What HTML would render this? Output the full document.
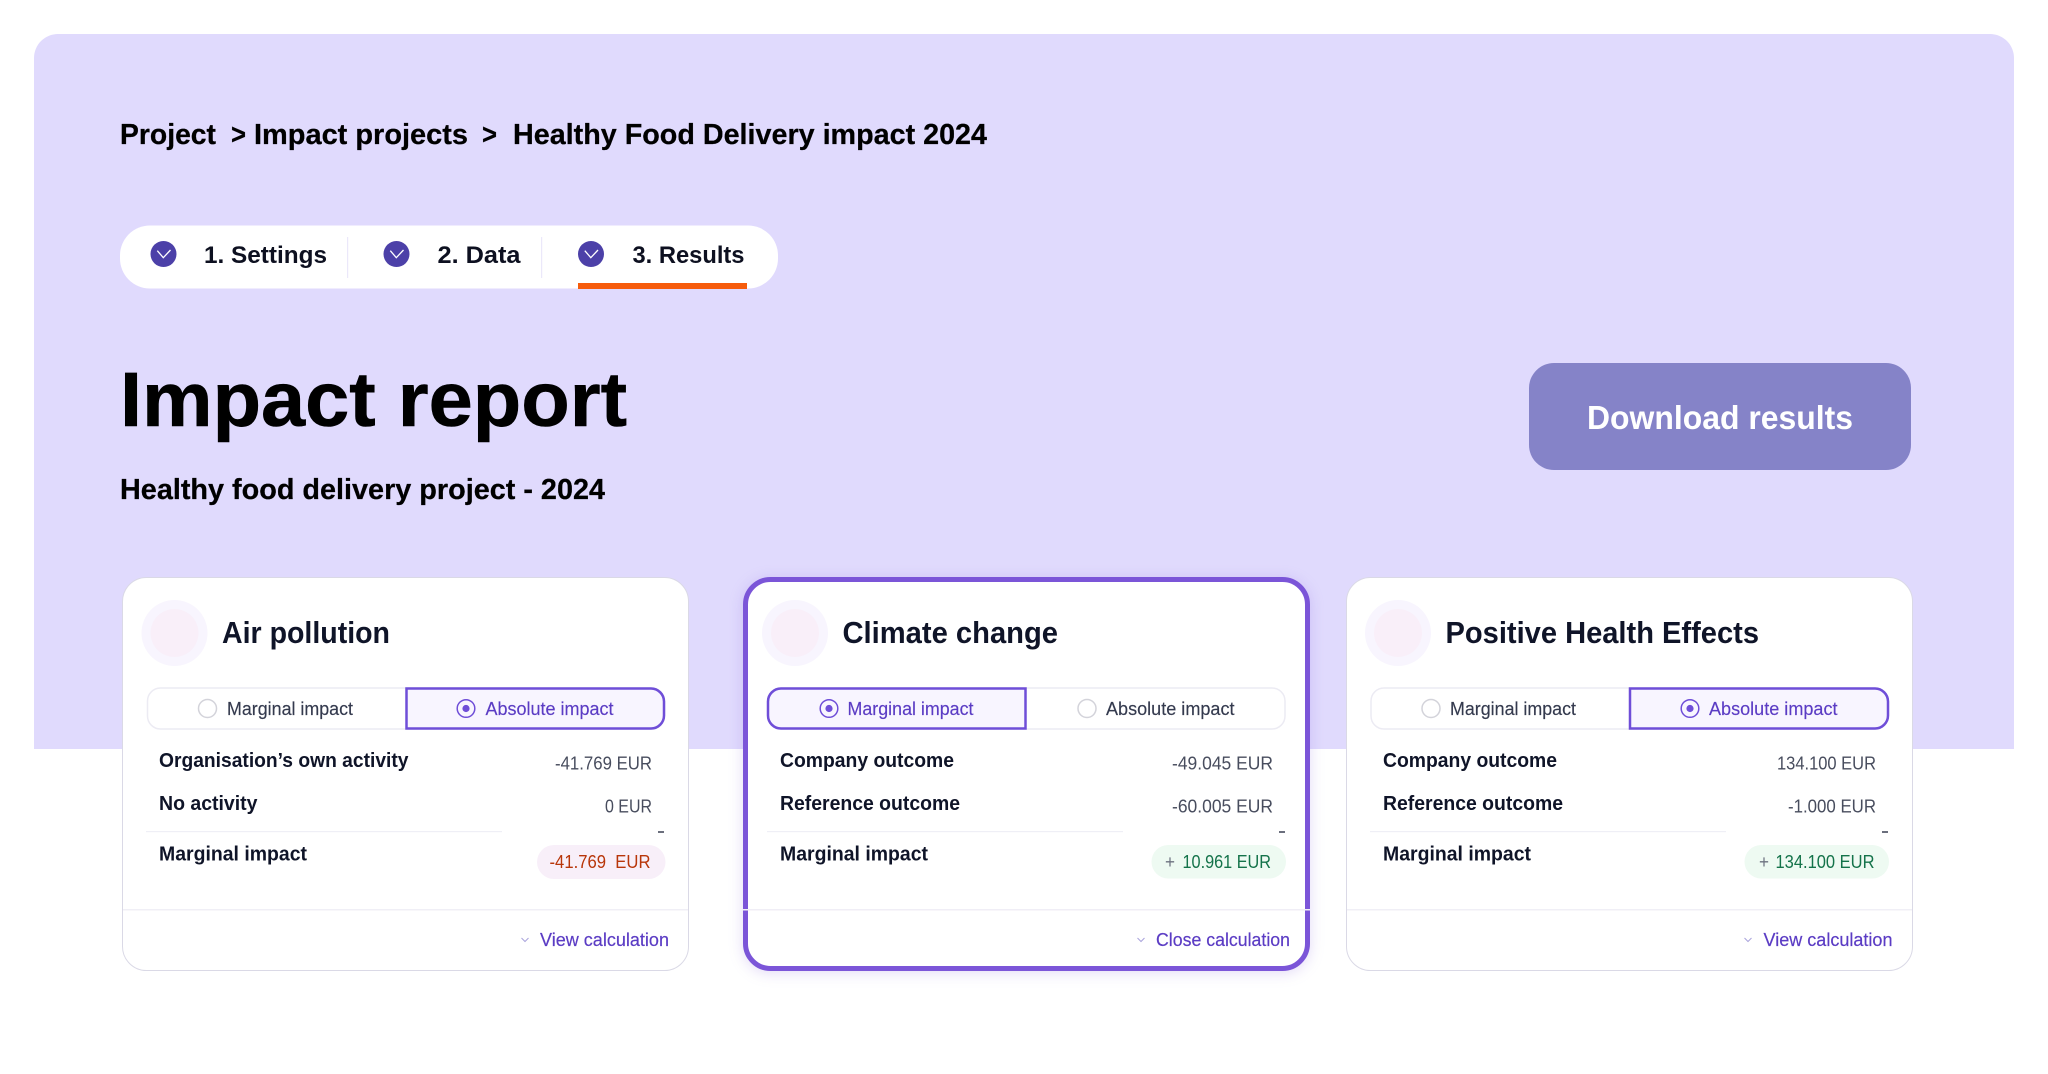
<!DOCTYPE html>
<html lang="en">
<head>
<meta charset="utf-8">
<title>Impact report</title>
<style>
html,body{margin:0;padding:0;background:#fff;width:2048px;height:1074px;overflow:hidden}
svg{display:block}
text{font-family:"Liberation Sans",sans-serif;white-space:pre}
.crumb{font-size:29px;font-weight:700;fill:#000;stroke:#000;stroke-width:.25}
.step{font-size:24px;font-weight:700;fill:#0d1020}
.title{font-size:31px;font-weight:700;fill:#0f1428}
.tog{font-size:18.5px;fill:#343a4e;stroke:#343a4e;stroke-width:.15}
.toga{font-size:18.5px;fill:#5b3cc4;stroke:#5b3cc4;stroke-width:.15}
.lab{font-size:20.5px;font-weight:700;fill:#0f1428}
.val{font-size:18.5px;fill:#484d5e}
.neg{font-size:18.5px;fill:#b8360a}
.pos{font-size:18.5px;fill:#14734a}
.plus{font-size:18px;fill:#6d7280}
.link{font-size:18.5px;fill:#5b3cc4;stroke:#5b3cc4;stroke-width:.2}
</style>
</head>
<body>
<svg xmlns="http://www.w3.org/2000/svg" width="2048" height="1074" viewBox="0 0 2048 1074">
<rect width="2048" height="1074" fill="#fff"/>
<path d="M34 749V58a24 24 0 0 1 24-24H1990a24 24 0 0 1 24 24V749Z" fill="#e0dafd"/>

<!-- breadcrumb -->
<text class="crumb" x="120" y="144" textLength="96" lengthAdjust="spacingAndGlyphs">Project</text>
<text class="crumb" x="231" y="144" textLength="15" lengthAdjust="spacingAndGlyphs">&gt;</text>
<text class="crumb" x="254" y="144" textLength="214" lengthAdjust="spacingAndGlyphs">Impact projects</text>
<text class="crumb" x="482" y="144" textLength="15" lengthAdjust="spacingAndGlyphs">&gt;</text>
<text class="crumb" x="513" y="144" textLength="474" lengthAdjust="spacingAndGlyphs">Healthy Food Delivery impact 2024</text>

<!-- steps -->
<rect x="120" y="225.5" width="658" height="63" rx="30" fill="#fff"/>
<rect x="347" y="237" width="1.2" height="41" fill="#ebe8fa"/>
<rect x="541" y="237" width="1.2" height="41" fill="#ebe8fa"/>
<circle cx="163.5" cy="254" r="13" fill="#4c40a8"/>
<path d="M157.3 250.7L163.3 257.7L170.5 250" fill="none" stroke="#fff" stroke-width="1.3"/>
<circle cx="396.5" cy="254" r="13" fill="#4c40a8"/>
<path d="M390.3 250.7L396.3 257.7L403.5 250" fill="none" stroke="#fff" stroke-width="1.3"/>
<circle cx="591" cy="254" r="13" fill="#4c40a8"/>
<path d="M584.8 250.7L590.8 257.7L598 250" fill="none" stroke="#fff" stroke-width="1.3"/>
<text class="step" x="204" y="263" textLength="123" lengthAdjust="spacingAndGlyphs">1. Settings</text>
<text class="step" x="437.5" y="263" textLength="83" lengthAdjust="spacingAndGlyphs">2. Data</text>
<text class="step" x="632.5" y="263" textLength="112" lengthAdjust="spacingAndGlyphs">3. Results</text>
<rect x="578" y="283" width="169" height="6" fill="#f65c0c"/>

<!-- heading -->
<text x="120" y="426" font-size="77" font-weight="700" fill="#000" stroke="#000" stroke-width=".6" textLength="507" lengthAdjust="spacingAndGlyphs">Impact report</text>
<text x="120" y="499" font-size="29" font-weight="700" fill="#000" stroke="#000" stroke-width=".25" textLength="485" lengthAdjust="spacingAndGlyphs">Healthy food delivery project - 2024</text>

<!-- button -->
<rect x="1529" y="363" width="382" height="107" rx="25" fill="#8583c8"/>
<text x="1587" y="429" font-size="33" font-weight="700" fill="#fff" textLength="266" lengthAdjust="spacingAndGlyphs">Download results</text>

<!-- card 1 -->
<rect x="122.5" y="577.5" width="566" height="393" rx="24" fill="#fff" stroke="#dad9e6"/>
<circle cx="174.5" cy="633" r="33" fill="#f8f5fe"/>
<circle cx="174.5" cy="633" r="24" fill="#f9eff9"/>
<text class="title" x="222" y="643" textLength="168" lengthAdjust="spacingAndGlyphs">Air pollution</text>
<rect x="147.5" y="688" width="517" height="41" rx="13" fill="#fff" stroke="#ecebf3" stroke-width="1.5"/>
<path d="M406.5 688.5H651a13 13 0 0 1 13 13V715.5a13 13 0 0 1-13 13H406.5Z" fill="#f8f5ff" stroke="#6f4ed8" stroke-width="2.5"/>
<circle cx="207.5" cy="708.5" r="9" fill="#fff" stroke="#d3d3da" stroke-width="1.5"/>
<text class="tog" x="227" y="715" textLength="126" lengthAdjust="spacingAndGlyphs">Marginal impact</text>
<circle cx="466" cy="708.5" r="8.8" fill="none" stroke="#6f4ed8" stroke-width="1.5"/>
<circle cx="466" cy="708.5" r="3.6" fill="#6f4ed8"/>
<text class="toga" x="485.5" y="715" textLength="128" lengthAdjust="spacingAndGlyphs">Absolute impact</text>
<text class="lab" x="159" y="767" textLength="249.5" lengthAdjust="spacingAndGlyphs">Organisation’s own activity</text>
<text class="val" x="555" y="769.5" textLength="97" lengthAdjust="spacingAndGlyphs">-41.769 EUR</text>
<text class="lab" x="159" y="810" textLength="98.5" lengthAdjust="spacingAndGlyphs">No activity</text>
<text class="val" x="605" y="812.5" textLength="47" lengthAdjust="spacingAndGlyphs">0 EUR</text>
<rect x="146" y="831" width="356" height="1.2" fill="#efeff6"/>
<rect x="658" y="831" width="6" height="2" fill="#6b6f7d"/>
<text class="lab" x="159" y="860.5" textLength="148" lengthAdjust="spacingAndGlyphs">Marginal impact</text>
<rect x="537" y="845" width="128.5" height="34" rx="17" fill="#f8eff9"/>
<text class="neg" x="549.5" y="868" textLength="101" lengthAdjust="spacingAndGlyphs">-41.769  EUR</text>
<rect x="123" y="909" width="565" height="1.5" fill="#f0eff6"/>
<path d="M521.5 938L525 941.5L528.5 938" fill="none" stroke="#a9a3dc" stroke-width="1"/>
<text class="link" x="540" y="946" textLength="129" lengthAdjust="spacingAndGlyphs">View calculation</text>

<!-- card 2 -->
<rect x="745.5" y="579.5" width="562" height="389" rx="25" fill="#fff" stroke="#7b55d8" stroke-width="5" style="filter:drop-shadow(0 2px 7px rgba(124,85,216,.22))"/>
<circle cx="795" cy="633" r="33" fill="#f8f5fe"/>
<circle cx="795" cy="633" r="24" fill="#f9eff9"/>
<text class="title" x="842.5" y="643" textLength="215.5" lengthAdjust="spacingAndGlyphs">Climate change</text>
<rect x="768" y="688" width="517" height="41" rx="13" fill="#fff" stroke="#ecebf3" stroke-width="1.5"/>
<path d="M1025.5 688.5H781a13 13 0 0 0-13 13V715.5a13 13 0 0 0 13 13H1025.5Z" fill="#f8f5ff" stroke="#6f4ed8" stroke-width="2.5"/>
<circle cx="829" cy="708.5" r="8.8" fill="none" stroke="#6f4ed8" stroke-width="1.5"/>
<circle cx="829" cy="708.5" r="3.6" fill="#6f4ed8"/>
<text class="toga" x="847.5" y="715" textLength="126" lengthAdjust="spacingAndGlyphs">Marginal impact</text>
<circle cx="1087" cy="708.5" r="9" fill="#fff" stroke="#d3d3da" stroke-width="1.5"/>
<text class="tog" x="1106" y="715" textLength="128.5" lengthAdjust="spacingAndGlyphs">Absolute impact</text>
<text class="lab" x="780" y="767" textLength="174" lengthAdjust="spacingAndGlyphs">Company outcome</text>
<text class="val" x="1172" y="769.5" textLength="101" lengthAdjust="spacingAndGlyphs">-49.045 EUR</text>
<text class="lab" x="780" y="810" textLength="180" lengthAdjust="spacingAndGlyphs">Reference outcome</text>
<text class="val" x="1172" y="812.5" textLength="101" lengthAdjust="spacingAndGlyphs">-60.005 EUR</text>
<rect x="767" y="831" width="356" height="1.2" fill="#efeff6"/>
<rect x="1279" y="831" width="6" height="2" fill="#6b6f7d"/>
<text class="lab" x="780" y="860.5" textLength="148" lengthAdjust="spacingAndGlyphs">Marginal impact</text>
<rect x="1151.5" y="845" width="134.5" height="33.5" rx="16.7" fill="#eefaf2"/>
<text class="plus" x="1165" y="868" textLength="10" lengthAdjust="spacingAndGlyphs">+</text>
<text class="pos" x="1182.5" y="868" textLength="88.5" lengthAdjust="spacingAndGlyphs">10.961 EUR</text>
<rect x="743" y="909" width="567" height="1.5" fill="#f0eef6"/>
<path d="M1137.5 938L1141 941.5L1144.5 938" fill="none" stroke="#a9a3dc" stroke-width="1"/>
<text class="link" x="1156" y="946" textLength="134" lengthAdjust="spacingAndGlyphs">Close calculation</text>

<!-- card 3 -->
<rect x="1346.5" y="577.5" width="566" height="393" rx="24" fill="#fff" stroke="#dad9e6"/>
<circle cx="1398" cy="633" r="33" fill="#f8f5fe"/>
<circle cx="1398" cy="633" r="24" fill="#f9eff9"/>
<text class="title" x="1445.5" y="643" textLength="313.5" lengthAdjust="spacingAndGlyphs">Positive Health Effects</text>
<rect x="1371" y="688" width="517" height="41" rx="13" fill="#fff" stroke="#ecebf3" stroke-width="1.5"/>
<path d="M1630 688.5H1875a13 13 0 0 1 13 13V715.5a13 13 0 0 1-13 13H1630Z" fill="#f8f5ff" stroke="#6f4ed8" stroke-width="2.5"/>
<circle cx="1431" cy="708.5" r="9" fill="#fff" stroke="#d3d3da" stroke-width="1.5"/>
<text class="tog" x="1450" y="715" textLength="126" lengthAdjust="spacingAndGlyphs">Marginal impact</text>
<circle cx="1690" cy="708.5" r="8.8" fill="none" stroke="#6f4ed8" stroke-width="1.5"/>
<circle cx="1690" cy="708.5" r="3.6" fill="#6f4ed8"/>
<text class="toga" x="1709" y="715" textLength="128.5" lengthAdjust="spacingAndGlyphs">Absolute impact</text>
<text class="lab" x="1383" y="767" textLength="174" lengthAdjust="spacingAndGlyphs">Company outcome</text>
<text class="val" x="1777" y="769.5" textLength="99" lengthAdjust="spacingAndGlyphs">134.100 EUR</text>
<text class="lab" x="1383" y="810" textLength="180" lengthAdjust="spacingAndGlyphs">Reference outcome</text>
<text class="val" x="1788" y="812.5" textLength="88" lengthAdjust="spacingAndGlyphs">-1.000 EUR</text>
<rect x="1370" y="831" width="356" height="1.2" fill="#efeff6"/>
<rect x="1882" y="831" width="6" height="2" fill="#6b6f7d"/>
<text class="lab" x="1383" y="860.5" textLength="148" lengthAdjust="spacingAndGlyphs">Marginal impact</text>
<rect x="1744.5" y="845" width="144.5" height="33.5" rx="16.7" fill="#eefaf2"/>
<text class="plus" x="1759" y="868" textLength="10" lengthAdjust="spacingAndGlyphs">+</text>
<text class="pos" x="1775.5" y="868" textLength="99" lengthAdjust="spacingAndGlyphs">134.100 EUR</text>
<rect x="1347" y="909" width="565" height="1.5" fill="#f0eff6"/>
<path d="M1744.5 938L1748 941.5L1751.5 938" fill="none" stroke="#a9a3dc" stroke-width="1"/>
<text class="link" x="1763.5" y="946" textLength="129" lengthAdjust="spacingAndGlyphs">View calculation</text>
</svg>
</body>
</html>
